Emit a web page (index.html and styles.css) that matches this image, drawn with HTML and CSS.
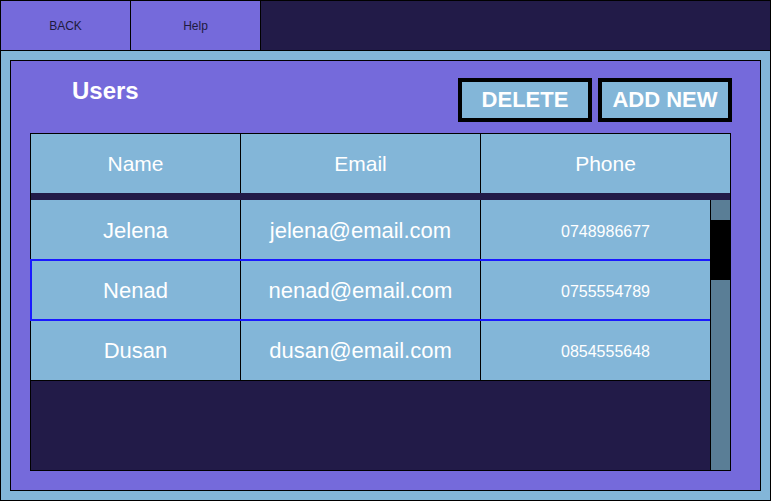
FILE: index.html
```html
<!DOCTYPE html>
<html lang="en">
<head>
<meta charset="utf-8">
<title>Users</title>
<link rel="stylesheet" href="styles.css">
</head>
<body>
<div class="app">
  <div class="topbar">
    <div class="tab">BACK</div>
    <div class="tab">Help</div>
    <div class="topbar-fill"></div>
  </div>
  <div class="main">
    <div class="panel">
      <div class="panel-head">
        <h1 class="title">Users</h1>
        <div class="actions">
          <button class="btn">DELETE</button>
          <button class="btn">ADD NEW</button>
        </div>
      </div>
      <div class="table">
        <div class="row head">
          <div class="cell">Name</div>
          <div class="cell">Email</div>
          <div class="cell">Phone</div>
        </div>
        <div class="body">
          <div class="row">
            <div class="cell">Jelena</div>
            <div class="cell">jelena@email.com</div>
            <div class="cell phone">0748986677</div>
          </div>
          <div class="row selected">
            <div class="cell">Nenad</div>
            <div class="cell">nenad@email.com</div>
            <div class="cell phone">0755554789</div>
          </div>
          <div class="row last">
            <div class="cell">Dusan</div>
            <div class="cell">dusan@email.com</div>
            <div class="cell phone">0854555648</div>
          </div>
        </div>
        <div class="scrollbar"><div class="thumb"></div></div>
      </div>
    </div>
  </div>
</div>
</body>
</html>
```

FILE: styles.css
```css
* { box-sizing: border-box; }
html, body { margin: 0; padding: 0; }
body {
  width: 771px;
  height: 501px;
  font-family: "Liberation Sans", Arial, sans-serif;
  overflow: hidden;
}
.app {
  width: 771px;
  height: 501px;
  border: 1px solid #000;
  background: #83b6d8;
  display: flex;
  flex-direction: column;
}
.topbar {
  height: 50px;
  border-bottom: 1px solid #000;
  display: flex;
  flex: none;
}
.tab {
  width: 130px;
  border-right: 1px solid #000;
  background: #756adb;
  color: #1e1a40;
  font-size: 12px;
  display: flex;
  align-items: center;
  justify-content: center;
}
.topbar-fill {
  flex: 1;
  background: #221b48;
}
.main {
  flex: 1;
  padding: 9px;
  display: flex;
}
.panel {
  flex: 1;
  border: 1px solid #000;
  background: #756adb;
  display: flex;
  flex-direction: column;
}
.panel-head {
  height: 72px;
  display: flex;
  justify-content: space-between;
  align-items: flex-start;
  padding: 0 28px 0 61px;
}
.title {
  margin: 16px 0 0;
  font-size: 24px;
  line-height: 28px;
  font-weight: bold;
  color: #fff;
}
.actions {
  display: flex;
  gap: 6px;
  margin-top: 17px;
}
.btn {
  width: 134px;
  height: 44px;
  border: 4px solid #000;
  background: #83b6d8;
  color: #fff;
  font-family: "Liberation Sans", Arial, sans-serif;
  font-weight: bold;
  font-size: 22px;
  padding: 0;
  margin: 0;
}
.table {
  position: relative;
  margin-left: 19px;
  width: 701px;
  height: 338px;
  border: 1px solid #000;
  background: #221b48;
  color: #fff;
}
.row {
  display: grid;
  grid-template-columns: 210px 240px 1fr;
  height: 60px;
  background: #83b6d8;
}
.row.head {
  height: 66px;
  border-bottom: 7px solid #221b48;
  font-size: 21px;
}
.cell {
  border-right: 1px solid #000;
  display: flex;
  align-items: center;
  justify-content: center;
}
.cell:last-child { border-right: none; }
.body .row { font-size: 22px; }
.body .cell { padding-top: 1px; }
.body .row.last {
  height: 61px;
  border-bottom: 1px solid #000;
}
.body .cell.phone {
  font-size: 16px;
  padding-top: 4px;
}
.row.selected {
  outline: 2px solid #1a1aff;
  outline-offset: -1px;
  position: relative;
}
.scrollbar {
  position: absolute;
  left: 679px;
  top: 66px;
  bottom: -1px;
  width: 21px;
  border: 1px solid #000;
  border-top: none;
  background: #5a7e96;
  z-index: 2;
}
.thumb {
  margin: 20px -1px 0;
  height: 60px;
  background: #000;
}
```
